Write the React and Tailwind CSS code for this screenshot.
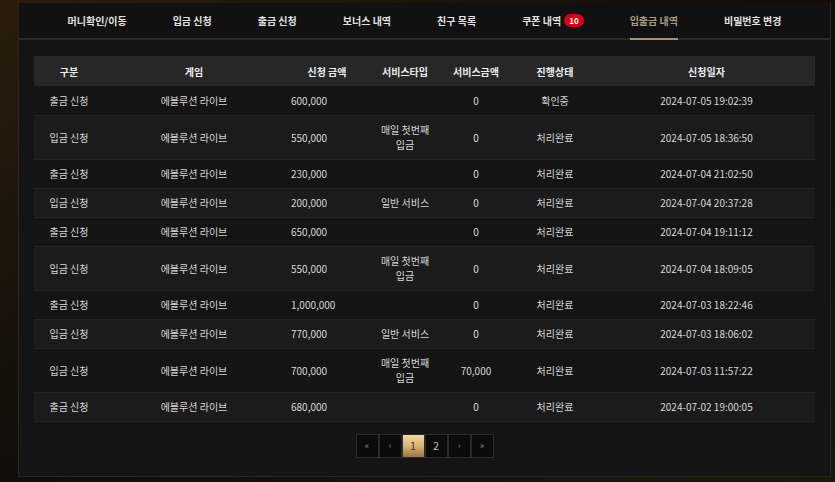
const tabs = [
  { label: '머니확인/이동' },
  { label: '입금 신청' },
  { label: '출금 신청' },
  { label: '보너스 내역' },
  { label: '친구 목록' },
  { label: '쿠폰 내역', badge: '10' },
  { label: '입출금 내역', active: true },
  { label: '비밀번호 변경' },
];

const headers = ['구분', '게임', '신청 금액', '서비스타입', '서비스금액', '진행상태', '신청일자'];
const widths = ['w-[70px]', 'w-[180px]', 'w-[86px]', 'w-[70px]', 'w-[72px]', 'w-[86px]', ''];

const rows = [
  ['출금 신청', '600,000', '', '0', '확인중', '2024-07-05 19:02:39'],
  ['입금 신청', '550,000', 'first', '0', '처리완료', '2024-07-05 18:36:50'],
  ['출금 신청', '230,000', '', '0', '처리완료', '2024-07-04 21:02:50'],
  ['입금 신청', '200,000', '일반 서비스', '0', '처리완료', '2024-07-04 20:37:28'],
  ['출금 신청', '650,000', '', '0', '처리완료', '2024-07-04 19:11:12'],
  ['입금 신청', '550,000', 'first', '0', '처리완료', '2024-07-04 18:09:05'],
  ['출금 신청', '1,000,000', '', '0', '처리완료', '2024-07-03 18:22:46'],
  ['입금 신청', '770,000', '일반 서비스', '0', '처리완료', '2024-07-03 18:06:02'],
  ['입금 신청', '700,000', 'first', '70,000', '처리완료', '2024-07-03 11:57:22'],
  ['출금 신청', '680,000', '', '0', '처리완료', '2024-07-02 19:00:05'],
];

const ServiceType = ({ value }) => {
  if (value === 'first') {
    return (
      <span className="block leading-[15px]">
        매일 첫번째
        <br />
        입금
      </span>
    );
  }
  return value;
};

const PageButton = ({ children, active }) => (
  <button
    className={
      active
        ? 'w-[23px] h-[24px] border border-[#2a2a2a] bg-gradient-to-b from-[#f3d9a0] via-[#d8b372] to-[#9c7440] text-[#4b3521] text-[11px]'
        : 'w-[23px] h-[24px] border border-[#2a2a2a] bg-[#0b0b0b] text-[#8a8a8a] text-[9px]'
    }
  >
    {children}
  </button>
);

export default function App() {
  return (
    <div
      className="w-[835px] h-[482px] overflow-hidden bg-gradient-to-br from-[#2a1d0e] via-[#120d08] to-[#1d160a] pt-[3px] pl-[18px] font-['Noto_Sans_CJK_KR',sans-serif]"
    >
      <div className="w-[813px] h-[474px] bg-[#141414] border border-[#262626] border-t-0">
        {/* Tabs */}
        <div className="h-[37px] bg-[#111111] border-b-2 border-[#2a2a2a] flex justify-center items-center gap-[46px]">
          {tabs.map((tab) => (
            <div key={tab.label} className="relative h-full flex items-center">
              <span
                className={`text-[10px] font-bold ${tab.active ? 'text-[#a89a84]' : 'text-[#e2e2e2]'}`}
              >
                {tab.label}
              </span>
              {tab.badge && (
                <span className="ml-[3px] h-[13px] px-[5px] rounded-full bg-[#d2031b] text-white text-[8px] font-bold leading-[13px]">
                  {tab.badge}
                </span>
              )}
              {tab.active && (
                <span className="absolute left-0 right-0 bottom-[-2px] h-[2px] bg-[#a8916d]"></span>
              )}
            </div>
          ))}
        </div>

        {/* Table */}
        <div className="px-[15px] pt-[16px]">
          <table className="w-full table-fixed border-collapse text-[10px]">
            <colgroup>
              {widths.map((w, i) => (
                <col key={i} className={w} />
              ))}
            </colgroup>
            <thead>
              <tr className="h-[30px] bg-[#272727]">
                {headers.map((h) => (
                  <th key={h} className="font-bold text-[#ededed] text-center">
                    {h}
                  </th>
                ))}
              </tr>
            </thead>
            <tbody>
              {rows.map((r, i) => {
                const tall = r[2] === 'first';
                const striped = i % 2 === 1;
                return (
                  <tr
                    key={i}
                    className={`${tall ? 'h-[44px]' : 'h-[29px]'} ${striped ? 'bg-[#1b1b1b] border-y border-[#242424]' : ''} text-[#d8d8d8]`}
                  >
                    <td className="text-center">{r[0]}</td>
                    <td className="text-center">에볼루션 라이브</td>
                    <td className="text-left pl-[7px]">{r[1]}</td>
                    <td className="text-center">
                      <ServiceType value={r[2]} />
                    </td>
                    <td className="text-center">{r[3]}</td>
                    <td className="text-center">{r[4]}</td>
                    <td className="text-center">{r[5]}</td>
                  </tr>
                );
              })}
            </tbody>
          </table>

          {/* Pagination */}
          <div className="mt-[12px] flex justify-center">
            <div className="flex">
              <PageButton>«</PageButton>
              <PageButton>‹</PageButton>
              <PageButton active>1</PageButton>
              <PageButton>
                <span className="text-[11px] text-[#bdbdbd]">2</span>
              </PageButton>
              <PageButton>›</PageButton>
              <PageButton>»</PageButton>
            </div>
          </div>
        </div>
      </div>
    </div>
  );
}
